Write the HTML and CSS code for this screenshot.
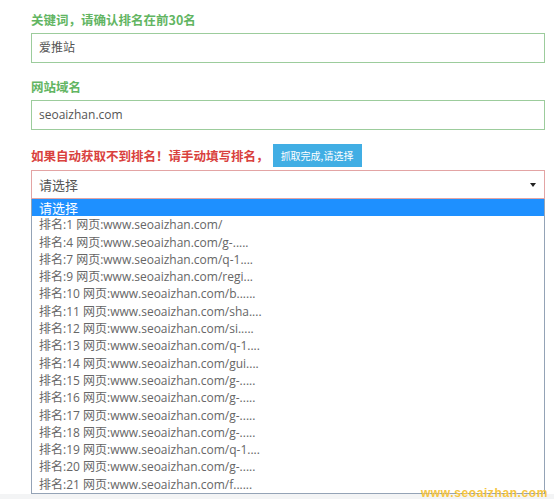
FILE: index.html
```html
<!DOCTYPE html>
<html lang="zh-CN">
<head>
<meta charset="utf-8">
<link rel="stylesheet" href="styles.css">
</head>
<body>
<div class="page">
  <div class="form">
    <div class="label green">关键词，请确认排名在前30名</div>
    <div class="input">爱推站</div>
    <div class="label green second">网站域名</div>
    <div class="input">seoaizhan.com</div>
    <div class="red-row">
      <span class="label red">如果自动获取不到排名！请手动填写排名，</span>
      <span class="btn">抓取完成,请选择</span>
    </div>
    <div class="select">
      <span>请选择</span>
      <svg class="arrow" width="6" height="4" viewBox="0 0 6 4"><path d="M0 0H6L3 4Z" fill="#222"/></svg>
    </div>
    <div class="listbox">
      <div class="opt sel">请选择</div>
      <div class="opt">排名:1 网页:www.seoaizhan.com/</div>
      <div class="opt">排名:4 网页:www.seoaizhan.com/g-.....</div>
      <div class="opt">排名:7 网页:www.seoaizhan.com/q-1....</div>
      <div class="opt">排名:9 网页:www.seoaizhan.com/regi...</div>
      <div class="opt">排名:10 网页:www.seoaizhan.com/b......</div>
      <div class="opt">排名:11 网页:www.seoaizhan.com/sha....</div>
      <div class="opt">排名:12 网页:www.seoaizhan.com/si.....</div>
      <div class="opt">排名:13 网页:www.seoaizhan.com/q-1....</div>
      <div class="opt">排名:14 网页:www.seoaizhan.com/gui....</div>
      <div class="opt">排名:15 网页:www.seoaizhan.com/g-.....</div>
      <div class="opt">排名:16 网页:www.seoaizhan.com/g-.....</div>
      <div class="opt">排名:17 网页:www.seoaizhan.com/g-.....</div>
      <div class="opt">排名:18 网页:www.seoaizhan.com/g-.....</div>
      <div class="opt">排名:19 网页:www.seoaizhan.com/q-1....</div>
      <div class="opt">排名:20 网页:www.seoaizhan.com/g-.....</div>
      <div class="opt">排名:21 网页:www.seoaizhan.com/f......</div>
    </div>
  </div>
  <div class="footer"><span class="watermark">www.seoaizhan.com</span></div>
</div>
</body>
</html>
```
FILE: styles.css
```css
html, body {
  margin: 0;
  padding: 0;
  background: #fff;
}
body {
  font-family: "Open Sans", "Noto Sans CJK SC", sans-serif;
  width: 554px;
  height: 499px;
  overflow: hidden;
}
.page {
  display: flex;
  flex-direction: column;
  height: 499px;
}
.form {
  padding: 11px 9px 0 31px;
  display: flex;
  flex-direction: column;
  flex: 1;
}
.label {
  font-family: "Noto Sans CJK SC", sans-serif;
  font-size: 12.5px;
  font-weight: bold;
  line-height: 18px;
}
.green { color: #62b562; }
.second { margin-top: 15px; }
.red { color: #d9413d; }
.input {
  margin-top: 4px;
  height: 28px;
  border: 1px solid #9ccc9c;
  box-sizing: content-box;
  font-size: 12px;
  line-height: 28px;
  color: #555;
  padding-left: 7px;
  font-family: "Open Sans", "Noto Sans CJK SC", sans-serif;
}
.red-row {
  margin-top: 14px;
  display: flex;
  align-items: center;
  height: 23px;
  gap: 4px;
}
.btn {
  display: inline-flex;
  align-items: center;
  justify-content: center;
  width: 89px;
  height: 23px;
  background: #41aee4;
  color: #fff;
  font-family: "Noto Sans CJK SC", sans-serif;
  font-size: 10px;
}
.select {
  margin-top: 3px;
  height: 27px;
  border: 1px solid #e3a4a4;
  display: flex;
  align-items: center;
  justify-content: space-between;
  padding: 0 8px 0 7px;
  font-family: "Noto Sans CJK SC", sans-serif;
  font-size: 13px;
  color: #555;
}
.arrow { display: block; }
.listbox {
  border: 1px solid #94a3b6;
  border-top: none;
  display: flex;
  flex-direction: column;
  height: 294px;
  overflow: hidden;
}
.opt {
  height: 17.3px;
  line-height: 17.3px;
  font-size: 12px;
  color: #666;
  padding-left: 7px;
  font-family: "Open Sans", "Noto Sans CJK SC", sans-serif;
  white-space: nowrap;
}
.opt.sel {
  background: #1e90ff;
  color: #fff;
  font-size: 13px;
  font-family: "Noto Sans CJK SC", sans-serif;
}
.footer {
  height: 7px;
  background: #f3f4f5;
  position: relative;
}
.watermark {
  position: absolute;
  right: 6px;
  bottom: 0;
  font-family: "Liberation Sans", sans-serif;
  font-weight: bold;
  font-size: 12px;
  line-height: 11px;
  color: #f5c542;
  letter-spacing: 0.6px;
}
```
